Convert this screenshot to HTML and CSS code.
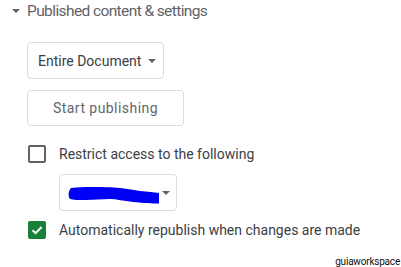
FILE: index.html
```html
<!DOCTYPE html>
<html>
<head>
<meta charset="utf-8">
<link rel="stylesheet" href="styles.css">
</head>
<body>
<div class="page">
  <div class="header">
    <span class="tri"></span>
    <span class="header-text">Published content &amp; settings</span>
  </div>
  <div class="content">
    <div class="select">
      <span>Entire Document</span>
      <span class="arrow"></span>
    </div>
    <div class="button">Start publishing</div>
    <div class="row">
      <span class="checkbox"></span>
      <span class="label">Restrict access to the following</span>
    </div>
    <div class="select select2">
      <svg class="scribble" width="92" height="18" viewBox="0 0 92 18">
        <path d="M3 2 C10 1 16 1 22 1 C32 1 44 1 52 2 C60 3 66 4 72 5 C80 6 86 6 91 7 L91 17.5 C84 17.5 76 17 65 16 C56 15 48 13 42 13 C34 13 26 14 18 14 C10 14 5 14 2 13 C0 11 0 5 3 2 Z" fill="#0000f5"/>
      </svg>
      <span class="arrow"></span>
    </div>
    <div class="row">
      <span class="checkbox checked">
        <svg width="18" height="18" viewBox="0 0 18 18"><path d="M4.5 9.2 L7.6 12.2 L13.6 6" fill="none" stroke="#fff" stroke-width="2"/></svg>
      </span>
      <span class="label">Automatically republish when changes are made</span>
    </div>
  </div>
  <div class="watermark">guiaworkspace</div>
</div>
</body>
</html>
```
FILE: styles.css
```css
html, body {
  margin: 0;
  padding: 0;
  background: #fff;
}
.page {
  width: 401px;
  height: 267px;
  position: relative;
  font-family: Roboto, "Liberation Sans", sans-serif;
  overflow: hidden;
}
.header {
  display: flex;
  align-items: center;
  height: 21px;
  padding-left: 12px;
}
.tri {
  width: 0;
  height: 0;
  border-left: 4px solid transparent;
  border-right: 4px solid transparent;
  border-top: 4px solid #5f6368;
  margin-right: 7px;
}
.header-text {
  font-size: 15.5px;
  letter-spacing: -0.6px;
  color: #5f6368;
}
.content {
  padding-left: 27px;
  display: flex;
  flex-direction: column;
  align-items: flex-start;
}
.select {
  margin-top: 21px;
  box-sizing: border-box;
  width: 137px;
  height: 37px;
  border: 1px solid #dadce0;
  border-radius: 4px;
  display: flex;
  align-items: center;
  padding-left: 10px;
  font-size: 14px;
  color: #3c4043;
}
.arrow {
  width: 0;
  height: 0;
  border-left: 4px solid transparent;
  border-right: 4px solid transparent;
  border-top: 4px solid #5f6368;
  margin-left: 7px;
}
.button {
  margin-top: 11px;
  box-sizing: border-box;
  width: 157px;
  height: 36px;
  border: 1px solid #dadce0;
  border-radius: 4px;
  display: flex;
  align-items: center;
  justify-content: center;
  font-size: 14px;
  color: #63666a;
  letter-spacing: 0.45px;
}
.row {
  display: flex;
  align-items: center;
  margin-top: 19px;
  margin-left: 1px;
}
.checkbox {
  box-sizing: border-box;
  width: 18px;
  height: 18px;
  border: 2px solid #5f6368;
  border-radius: 2px;
  margin-right: 13px;
  display: flex;
}
.checkbox.checked {
  background: #188038;
  border: none;
}
.label {
  font-size: 14px;
  color: #3c4043;
}
.select2 {
  margin-top: 11px;
  margin-left: 32px;
  width: 118px;
  padding-left: 8px;
}
.select2 .arrow {
  margin-left: 2px;
}
.select2 + .row {
  margin-top: 10px;
}
.scribble {
  display: block;
  margin-top: 5px;
}
.watermark {
  position: absolute;
  right: 1px;
  bottom: 0;
  font-size: 10px;
  letter-spacing: -0.2px;
  color: #111;
}
```
